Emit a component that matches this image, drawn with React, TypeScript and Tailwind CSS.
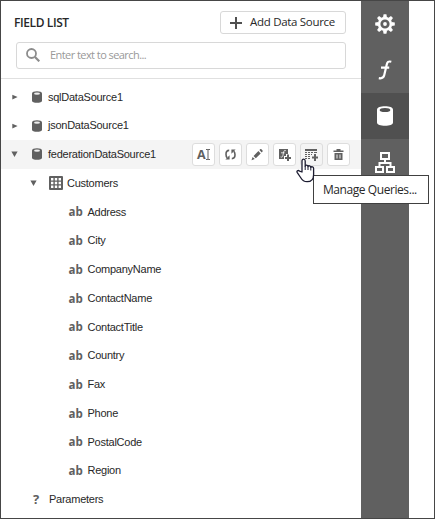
import type { ReactNode } from 'react';

const fields = ['Address', 'City', 'CompanyName', 'ContactName', 'ContactTitle', 'Country', 'Fax', 'Phone', 'PostalCode', 'Region'];

function Arrow({ open = false }: { open?: boolean }) {
  return (
    <svg className="h-2 w-2 shrink-0 fill-[#606060]" viewBox="0 0 8 8">
      <path d={open ? 'M1.4 1.5h6.2L4.5 7z' : 'M2.3 1.8v4.6L7.6 4.1z'} />
    </svg>
  );
}

function DbIcon() {
  return (
    <svg className="h-3 w-2.5 shrink-0" viewBox="0 0 10 12">
      <path fill="#606060" d="M0 2.3C0 1 2.2.2 5 .2s5 .8 5 2.1v7.4c0 1.3-2.2 2.1-5 2.1S0 11 0 9.7z" />
      <ellipse cx="5" cy="2.7" rx="3" ry="1.1" fill="#eee" />
    </svg>
  );
}

function GridIcon() {
  return (
    <svg className="h-3.5 w-3.5 shrink-0" viewBox="0 0 14 14">
      <rect width="14" height="14" rx="1" fill="#606060" />
      <path fill="#fff" d="M2 2h2.4v2.4H2zM5.8 2h2.4v2.4H5.8zM9.6 2H12v2.4H9.6zM2 5.8h2.4v2.4H2zM5.8 5.8h2.4v2.4H5.8zM9.6 5.8H12v2.4H9.6zM2 9.6h2.4V12H2zM5.8 9.6h2.4V12H5.8zM9.6 9.6H12V12H9.6z" />
    </svg>
  );
}

function ToolButton({ children, active = false }: { children: ReactNode; active?: boolean }) {
  return (
    <button className={`flex h-[23px] w-[23px] items-center justify-center rounded-[3px] border border-[#dddddd] ${active ? 'bg-[#f4f4f4]' : 'bg-white'}`}>
      <svg className="h-[15px] w-[15px] shrink-0" viewBox="0 0 15 15" fill="#606060">
        {children}
      </svg>
    </button>
  );
}

function Toolbar() {
  return (
    <div className="ml-auto mr-[11px] flex gap-1">
      <ToolButton>
        <text x="1" y="12" className="font-['Open_Sans',sans-serif] text-[12.5px] font-bold">A</text>
        <path d="M10 2h1.6l.4.4.4-.4H14v1h-1.5v9H14v1h-1.6l-.4-.4-.4.4H10v-1h1.5V3H10z" />
      </ToolButton>
      <ToolButton>
        <path fill="none" stroke="#606060" strokeWidth="1.6" d="M6.2 3.4C3.6 3.4 3 5 3 7.2c0 1.6.4 2.8 1.2 3.6M8.8 11.6c2.6 0 3.2-1.6 3.2-3.8 0-1.6-.4-2.8-1.2-3.6" />
        <path d="M6.6 8.2v4.4H2.4zM8.4 6.8V2.4h4.2z" />
      </ToolButton>
      <ToolButton>
        <path d="m1.5 13.2 1.1-3.3L4.8 12zM3.5 9l4.9-4.9 2.3 2.3-4.9 4.9zM9.4 3.1l.8-.8c.4-.4.8-.4 1.2 0l1.1 1.1c.4.4.4.8 0 1.2l-.8.8z" />
      </ToolButton>
      <ToolButton>
        <path d="M2 2h9v5H9v2H7v3H2z" />
        <path fill="none" stroke="#fff" strokeWidth=".8" d="M8.8 3.6c-1.8-.6-2 .6-2.4 2.5L5.9 8.6c-.3 1.5-1 1.8-2.3 1.3M4 5.8h3.6" />
        <path d="M10 7.5h2V10h2v2h-2v2h-2v-2H8v-2h2z" />
      </ToolButton>
      <ToolButton active>
        <path d="M1 2h12v2H1zM1 5h2v1H1zm3 0h2v1H4zm3 0h2v1H7zm3 0h3v1h-3zM1 7h2v1H1zm3 0h2v1H4zm3 0h1v1H7zM1 9h2v1H1zm3 0h2v1H4zM1 11h2v1H1zm3 0h2v1H4zM10 7h2v2.5h2v2h-2V14h-2v-2.5H8v-2h2z" />
      </ToolButton>
      <ToolButton>
        <path d="M5.5 2h4v1.5h3V5h-10V3.500h3zM3.500 6h8v7h-8z" />
        <path stroke="#fff" strokeWidth=".9" d="M6 7.500v4M9 7.500v4" />
      </ToolButton>
    </div>
  );
}

function Pointer() {
  return (
    <svg className="absolute left-[295px] top-[157px] h-[25px] w-[19px]" viewBox="0 0 19 25">
      <path
        fill="#fff" stroke="#1b1b30" strokeWidth="1.3" strokeLinejoin="round"
        d="M6 14V3c0-2.500 3.200-2.500 3.200 0v5.200c.3-1.500 2.800-1.500 2.800.5.3-1.400 2.800-1.200 2.800.7.6-1.100 2.800-.8 2.800 1.100v6.200c0 4-2 7-6.500 7-3.200 0-5-1.600-6.500-4.200L1.300 14.600c-1-1.700.8-2.800 2.200-1.500z"
      />
      <path fill="none" stroke="#1b1b30" d="M9.200 8v4M12 8.700V12M14.800 9.500v3" />
    </svg>
  );
}

function Tab({ children, active = false }: { children: ReactNode; active?: boolean }) {
  return (
    <div className={`flex h-[46px] items-center justify-center ${active ? 'bg-[#505050]' : ''}`}>
      <svg className="h-6 w-6" viewBox="0 0 24 24">{children}</svg>
    </div>
  );
}

const teeth = [0, 45, 90, 135, 180, 225, 270, 315];
const row = 'flex h-[28.75px] shrink-0 items-center';

export default function App() {
  return (
    <main className="relative flex h-[519px] w-[435px] overflow-hidden border border-[#464646] bg-white font-['Liberation_Sans',Arial,sans-serif] text-[11px] tracking-[-0.25px] text-[#282828]">
      <section className="flex w-[360px] flex-col">
        <header className="h-[78px] shrink-0 border-b border-[#e0e0e0] pl-[15px] pr-[15px] pt-[10px] font-['Open_Sans',sans-serif]">
          <div className="flex h-[23px] items-center justify-between">
            <h1 className="-ml-0.5 text-[12px] font-semibold tracking-[-0.4px]">FIELD LIST</h1>
            <button className="flex h-[23px] w-[126px] items-center rounded-[3px] border border-[#d8d8d8] pl-[9px]">
              <svg className="mr-[8px] h-3 w-3" viewBox="0 0 12 12" stroke="#505050" strokeWidth="2"><path d="M6 0v12M0 6h12" /></svg>
              <span className="relative -top-px whitespace-nowrap text-[11.5px] tracking-[-0.3px]">Add Data Source</span>
            </button>
          </div>
          <div className="mt-[8px] flex h-[27px] items-center rounded-[3px] border border-[#d8d8d8] pl-[9px] text-[#999999]">
            <svg className="mb-0.5 mr-[10px] h-3.5 w-3.5" viewBox="0 0 14 14" fill="none" stroke="#8c8c8c">
              <circle cx="5.5" cy="5.5" r="4.5" strokeWidth="1.8" /><path d="m9 9 4.300 4.300" strokeWidth="2.2" />
            </svg>
            <span className="text-[11px] tracking-[-0.56px]">Enter text to search...</span>
          </div>
        </header>
        <div className="flex flex-col pt-[3.5px]">
          {['sqlDataSource1', 'jsonDataSource1'].map((name) => (
            <div key={name} className={`${row} pl-[9px]`}><Arrow /><span className="w-[14px]" /><DbIcon /><span className="ml-[6px]">{name}</span></div>
          ))}
          <div className={`${row} bg-[#f4f4f4] pl-[9px]`}>
            <Arrow open /><span className="w-[14px]" /><DbIcon /><span className="ml-[6px]">federationDataSource1</span>
            <Toolbar />
          </div>
          <div className={`${row} pl-[28px]`}><Arrow open /><span className="w-[12px]" /><GridIcon /><span className="ml-[4px]">Customers</span></div>
          {fields.map((name) => (
            <div key={name} className={`${row} pl-[67.5px]`}>
              <span className="w-[19px] font-['Open_Sans',sans-serif] text-[11.5px] font-bold tracking-normal text-[#606060]">ab</span>
              <span>{name}</span>
            </div>
          ))}
          <div className={`${row} pl-[32px]`}>
            <span className="w-[16px] font-['Open_Sans',sans-serif] text-[13px] font-bold text-[#606060]">?</span>
            <span>Parameters</span>
          </div>
        </div>
      </section>
      <nav className="w-[48px] bg-[#606060]">
        <Tab>
          <circle cx="12" cy="12" r="5.900" fill="none" stroke="#fff" strokeWidth="2.600" />
          <circle cx="12" cy="12" r="1.900" fill="#fff" />
          {teeth.map((angle) => (
            <path key={angle} transform={`rotate(${angle} 12 12)`} fill="#fff" d="M10 5.500 10.600 2.200h2.800L14 5.500z" />
          ))}
        </Tab>
        <Tab>
          <path fill="none" stroke="#fff" strokeWidth="2.2" d="M18.300 3.700c-3-.7-4 .2-4.600 3L11.200 17.300c-.6 2.500-1.800 3.500-5.400 2.800M8 9.600h8.200" />
        </Tab>
        <Tab active>
          <path fill="#fff" d="M4 5.600C4 3.500 7.500 2.300 12 2.300s8 1.200 8 3.300v12.800c0 2.100-3.500 3.300-8 3.300s-8-1.200-8-3.300z" />
          <ellipse cx="12" cy="6" rx="5.300" ry="2" fill="#505050" />
        </Tab>
        <Tab>
          <g fill="none" stroke="#fff" strokeWidth="2">
            <path d="M8 3h8v6H8zM3 17h7v5H3zM14 17h7v5h-7zM12 9v4M6.500 17v-4h11v4" />
          </g>
        </Tab>
      </nav>
      <div className="absolute left-[312px] top-[174px] flex h-[29px] w-[116px] items-center border border-[#404040] bg-white pl-[9px] font-['Open_Sans',sans-serif] text-[12px] tracking-[-0.43px]">
        Manage Queries...
      </div>
      <Pointer />
    </main>
  );
}
